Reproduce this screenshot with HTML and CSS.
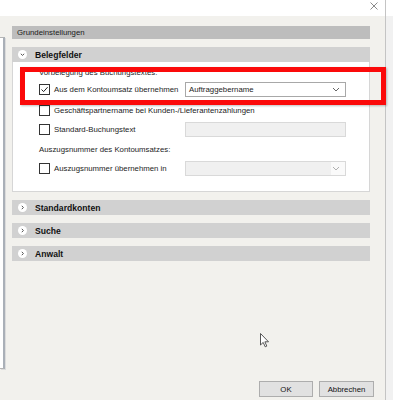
FILE: index.html
```html
<!DOCTYPE html>
<html lang="de">
<head>
<meta charset="utf-8">
<title>Grundeinstellungen</title>
<link rel="stylesheet" href="styles.css">
</head>
<body>
<div class="screen">
  <div class="dialog">
    <div class="titlebar">
      <svg class="close" width="8" height="8" viewBox="0 0 8 8"><path d="M0.5 0.5 L7.5 7.5 M7.5 0.5 L0.5 7.5" stroke="#8a8a8a" stroke-width="1" fill="none"/></svg>
    </div>
    <div class="client">
      <div class="leftlist"></div>
      <div class="main">
        <div class="groupbar">Grundeinstellungen</div>

        <div class="section">
          <div class="sechead">
            <span class="chev"><svg width="9" height="9" viewBox="0 0 9 9"><path d="M2.8 3.8 L4.5 5.4 L6.2 3.8" stroke="#555" stroke-width="1" fill="none"/></svg></span>
            <span class="sectitle">Belegfelder</span>
          </div>
          <div class="secbody">
            <div class="label l1">Vorbelegung des Buchungstextes:</div>
            <div class="row r1">
              <label class="check"><span class="box"><svg width="9" height="9" viewBox="0 0 9 9"><path d="M1.5 4.5 L3.6 6.6 L7.6 2.2" stroke="#222" stroke-width="1" fill="none"/></svg></span><span>Aus dem Kontoumsatz übernehmen</span></label>
              <div class="combo"><span>Auftraggebername</span><svg class="dd" width="8" height="5" viewBox="0 0 8 5"><path d="M1 1 L4 4 L7 1" stroke="#666" stroke-width="1" fill="none"/></svg></div>
            </div>
            <div class="row r2">
              <label class="check wide"><span class="box"></span><span>Geschäftspartnername bei Kunden-/Lieferantenzahlungen</span></label>
            </div>
            <div class="row r3">
              <label class="check"><span class="box"></span><span>Standard-Buchungstext</span></label>
              <div class="textbox disabled"></div>
            </div>
            <div class="label l2">Auszugsnummer des Kontoumsatzes:</div>
            <div class="row r4">
              <label class="check"><span class="box"></span><span>Auszugsnummer übernehmen in</span></label>
              <div class="combo disabled"><span></span><svg class="dd" width="8" height="5" viewBox="0 0 8 5"><path d="M1 1 L4 4 L7 1" stroke="#b0b0b0" stroke-width="1" fill="none"/></svg></div>
            </div>
          </div>
        </div>

        <div class="section">
          <div class="sechead">
            <span class="chev"><svg width="9" height="9" viewBox="0 0 9 9"><path d="M3.8 2.8 L5.4 4.5 L3.8 6.2" stroke="#555" stroke-width="1" fill="none"/></svg></span>
            <span class="sectitle">Standardkonten</span>
          </div>
        </div>
        <div class="section">
          <div class="sechead">
            <span class="chev"><svg width="9" height="9" viewBox="0 0 9 9"><path d="M3.8 2.8 L5.4 4.5 L3.8 6.2" stroke="#555" stroke-width="1" fill="none"/></svg></span>
            <span class="sectitle">Suche</span>
          </div>
        </div>
        <div class="section">
          <div class="sechead">
            <span class="chev"><svg width="9" height="9" viewBox="0 0 9 9"><path d="M3.8 2.8 L5.4 4.5 L3.8 6.2" stroke="#555" stroke-width="1" fill="none"/></svg></span>
            <span class="sectitle">Anwalt</span>
          </div>
        </div>

        <div class="footer">
          <button class="btn ok">OK</button>
          <button class="btn cancel">Abbrechen</button>
        </div>
      </div>
    </div>
  </div>
  <div class="behind"></div>
</div>
<div class="annot"></div>
<svg class="cursor" width="10" height="15" viewBox="0 0 10 15"><path d="M0.5 0.5 V12 L3.2 9.4 L5.2 13.8 L6.8 13.1 L4.9 8.8 H8.5 Z" fill="#fff" stroke="#444" stroke-width="0.9" stroke-linejoin="round"/></svg>
</body>
</html>
```

FILE: styles.css
```css
html, body {
  margin: 0;
  padding: 0;
}
body {
  width: 393px;
  height: 400px;
  overflow: hidden;
  position: relative;
  font-family: "Liberation Sans", Arial, sans-serif;
  font-size: 7.8px;
  color: #1c1c1c;
  background: #f1f1f1;
}
.screen {
  display: flex;
  height: 400px;
}
.dialog {
  width: 385px;
  display: flex;
  flex-direction: column;
  border-right: 1px solid #c4c4c4;
}
.titlebar {
  height: 16px;
  background: #ffffff;
  display: flex;
  justify-content: flex-end;
  align-items: flex-start;
  padding: 2px 7px 0 0;
  box-sizing: border-box;
}
.client {
  flex: 1;
  display: flex;
  background: #f2f1ed;
}
.leftlist {
  width: 3px;
  height: 330px;
  margin-top: 21px;
  background: #ffffff;
  border: 1px solid #b4b4b4;
  border-left: none;
  border-right: 2px solid #aab0b8;
  box-shadow: 1px 1px 0 #dcdcdc;
}
.main {
  flex: 1;
  display: flex;
  flex-direction: column;
  padding: 10px 11px 3px 7px;
  box-sizing: border-box;
}
.groupbar {
  height: 13px;
  line-height: 13px;
  background: #bdbdbd;
  padding-left: 5px;
  margin-right: 4px;
  color: #1a1a1a;
}
.section {
  margin-top: 8px;
  margin-right: 4px;
}
.sechead {
  height: 15px;
  background: #d1d1d1;
  display: flex;
  align-items: center;
  padding-left: 6px;
}
.chev {
  width: 9px;
  height: 9px;
  border-radius: 50%;
  background: #ffffff;
  display: flex;
  margin-right: 8px;
}
.sectitle {
  font-weight: bold;
  font-size: 8.6px;
  color: #111;
}
.secbody {
  height: 130px;
  box-sizing: border-box;
  background: #ffffff;
  border: 1px solid #d6d6d6;
  border-top: none;
  padding-left: 26px;
  display: flex;
  flex-direction: column;
}
.label {
  height: 14px;
  line-height: 14px;
}
.l1 { margin-top: 4px; }
.l2 { margin-top: 5px; }
.row {
  height: 18px;
  display: flex;
  align-items: center;
}
.r2 { margin-top: 3px; }
.r3 { margin-top: 1px; }
.r4 { margin-top: 2px; }
.check {
  width: 146px;
  display: flex;
  align-items: center;
  white-space: nowrap;
}
.check.wide { width: auto; }
.box {
  width: 9px;
  height: 9px;
  border: 1px solid #333;
  background: #fff;
  margin-right: 4px;
  display: flex;
  flex: none;
}
.combo, .textbox {
  width: 161px;
  height: 15px;
  box-sizing: border-box;
  border: 1px solid #a8a8a8;
  background: #ffffff;
  display: flex;
  align-items: center;
  justify-content: space-between;
  padding: 0 5px 0 3px;
}
.textbox.disabled {
  background: #f0f0f0;
  border-color: #d9d9d9;
}
.combo.disabled {
  background: linear-gradient(to right, #f0f0f0 0, #f0f0f0 145px, #fafafa 145px);
  border-color: #d9d9d9;
}
.footer {
  margin-top: auto;
  display: flex;
  justify-content: flex-end;
  gap: 6px;
}
.btn {
  height: 16px;
  margin: 0;
  padding: 0;
  background: #e1e1e1;
  border: 1px solid #adadad;
  font-family: "Liberation Sans", Arial, sans-serif;
  font-size: 7.8px;
  color: #111;
}
.ok { width: 54px; }
.cancel { width: 55px; }
.behind {
  flex: 1;
  background: linear-gradient(to bottom, #ffffff 0, #ffffff 16px, #f1f1f1 16px);
}
.annot {
  position: absolute;
  left: 20px;
  top: 67px;
  width: 366px;
  height: 38px;
  box-sizing: border-box;
  border: 5px solid #fb0a0a;
  box-shadow: 1px 1px 2px rgba(0,0,0,0.25);
}
.cursor {
  position: absolute;
  left: 260px;
  top: 333px;
}
```
